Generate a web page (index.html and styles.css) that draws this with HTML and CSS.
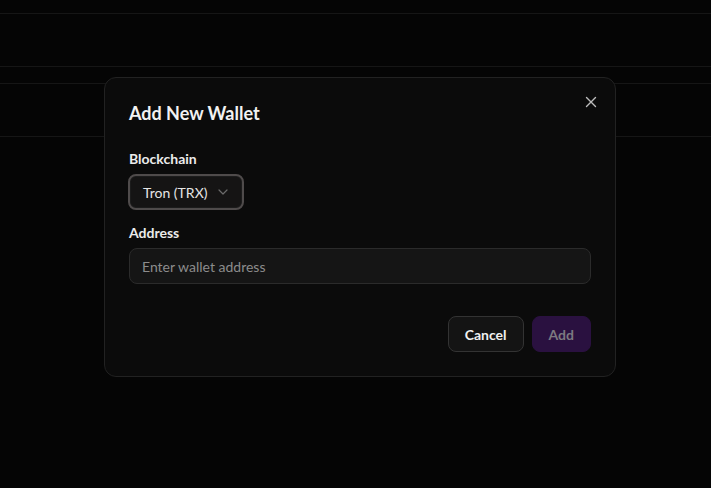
FILE: index.html
```html
<!DOCTYPE html>
<html lang="en">
<head>
  <meta charset="UTF-8">
  <title>Wallets</title>
  <link rel="stylesheet" href="styles.css">
</head>
<body>
  <!-- page content behind the dialog -->
  <div class="rows">
    <div class="row r-top"></div>
    <div class="row r-tall"></div>
    <div class="row r-thin"></div>
    <div class="row r-tall"></div>
  </div>

  <div class="overlay">
    <div class="modal">
      <button class="close-btn" aria-label="Close">
        <svg width="12" height="12" viewBox="0 0 12 12"><path d="M1.5 1.5l9 9M10.5 1.5l-9 9" stroke="#bdbdbd" stroke-width="1.4" stroke-linecap="round"/></svg>
      </button>
      <h2 class="modal-title">Add New Wallet</h2>

      <div class="field">
        <label class="field-label">Blockchain</label>
        <div class="select">
          <span>Tron (TRX)</span>
          <svg width="10" height="6" viewBox="0 0 10 6"><path d="M1 1l4 4 4-4" fill="none" stroke="#6a6a6a" stroke-width="1.2" stroke-linecap="round" stroke-linejoin="round"/></svg>
        </div>
      </div>

      <div class="field">
        <label class="field-label" for="addr">Address</label>
        <input id="addr" class="text-input" type="text" placeholder="Enter wallet address">
      </div>

      <div class="actions">
        <button class="btn btn-cancel">Cancel</button>
        <button class="btn btn-add" disabled>Add</button>
      </div>
    </div>
  </div>
</body>
</html>
```

FILE: styles.css
```css
* { box-sizing: border-box; margin: 0; padding: 0; }
body { background: #050505; font-family: Lato, "Noto Sans", sans-serif; color: #ededed; height: 100vh; overflow: hidden; }

.rows .row { border-bottom: 1px solid #161616; }
.r-top { height: 14px; }
.r-tall { height: 53px; }
.r-thin { height: 17px; }

.overlay { position: fixed; inset: 0; }
.modal { position: absolute; left: 104px; top: 77px; width: 512px; background: #0b0b0b; border: 1px solid #222; border-radius: 12px; padding: 23px 24px 24px; }
.modal-title { font-size: 18px; font-weight: 700; line-height: 24px; color: #f2f2f2; margin-bottom: 25px; }
.close-btn { position: absolute; top: 16px; right: 16px; width: 16px; height: 16px; background: none; border: none; display: flex; align-items: center; justify-content: center; cursor: pointer; }

.field { display: flex; flex-direction: column; align-items: flex-start; margin-bottom: 14px; }
.field-label { font-size: 14px; font-weight: 700; line-height: 18px; color: #ececec; margin-bottom: 6px; }
.select { height: 36px; margin-left: -1px; display: flex; align-items: center; gap: 11px; padding: 0 14px 0 13px; background: #151414; border: 2px solid #4f4b4b; box-shadow: inset 0 0 0 1px #1c1c1c; border-radius: 8px; font-size: 14px; color: #e6e6e6; }
.text-input { width: 100%; height: 36px; padding: 0 12px; background: #151515; border: 1px solid #2b2b2b; border-radius: 8px; font-family: inherit; font-size: 14px; color: #e6e6e6; outline: none; }
.text-input::placeholder { color: #8c8c8c; }

.actions { display: flex; justify-content: flex-end; gap: 8px; margin-top: 32px; }
.btn { height: 36px; padding: 0 16px; border-radius: 8px; font-family: inherit; font-size: 14px; font-weight: 700; cursor: pointer; }
.btn-cancel { background: #141414; border: 1px solid #333; color: #f0f0f0; }
.btn-add { background: #2a1140; border: 1px solid #2a1140; color: #7c7a80; }
```
